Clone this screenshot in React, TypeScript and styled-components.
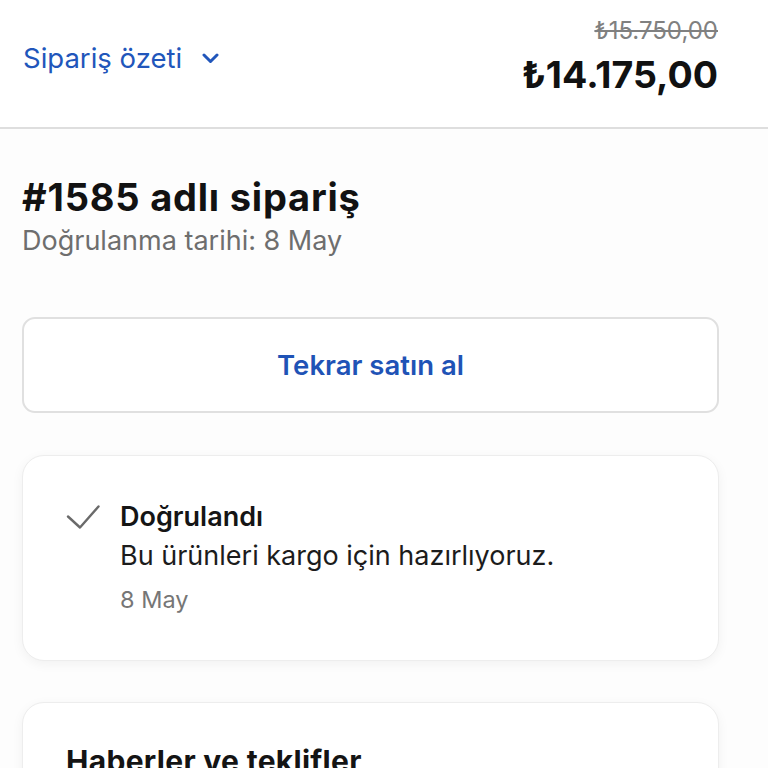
import React from 'react';
import styled, { createGlobalStyle } from 'styled-components';

const GlobalStyle = createGlobalStyle`
  html, body {
    margin: 0;
    padding: 0;
    background: #fdfdfd;
  }
  body {
    font-family: Inter, "Noto Sans", "DejaVu Sans", sans-serif;
    color: #141414;
    -webkit-font-smoothing: antialiased;
  }
`;

const Page = styled.div`
  width: 768px;
  height: 768px;
  overflow: hidden;
`;

const Header = styled.header`
  background: #ffffff;
  height: 129px;
  box-sizing: border-box;
  border-bottom: 2px solid #dedede;
  display: flex;
  justify-content: space-between;
  align-items: flex-start;
  padding: 17px 50px 0 23px;
`;

const SummaryToggle = styled.button`
  display: flex;
  align-items: center;
  gap: 20px;
  margin-top: 24px;
  padding: 0;
  border: none;
  background: none;
  font-family: inherit;
  font-size: 27.5px;
  color: #2156bb;
  cursor: pointer;
`;

const PriceBlock = styled.div`
  display: flex;
  flex-direction: column;
  align-items: flex-end;
`;

const OldPrice = styled.span`
  font-size: 24px;
  line-height: 28px;
  color: #808080;
  text-decoration: line-through;
  text-decoration-thickness: 2px;
`;

const Price = styled.span`
  margin-top: 8px;
  font-size: 37.5px;
  line-height: 44px;
  font-weight: 700;
  color: #111;
`;

const Main = styled.main`
  padding: 46px 49px 0 22px;
  display: flex;
  flex-direction: column;
`;

const Title = styled.h1`
  margin: 0;
  font-size: 38px;
  line-height: 44px;
  font-weight: 700;
  letter-spacing: 0.8px;
  color: #121212;
`;

const Subtitle = styled.p`
  margin: 7px 0 0;
  font-size: 27px;
  line-height: 30px;
  color: #6e6e6e;
`;

const OutlineButton = styled.button`
  margin-top: 61px;
  height: 96px;
  width: 100%;
  border: 2px solid #e0e0e0;
  border-radius: 13px;
  background: #ffffff;
  font-family: inherit;
  font-size: 27.5px;
  font-weight: 600;
  color: #1f53b6;
  cursor: pointer;
`;

const Card = styled.section<{ $top: number }>`
  margin-top: ${p => p.$top}px;
  background: #ffffff;
  border: 1px solid #ededed;
  border-radius: 22px;
  box-shadow: 0 3px 12px rgba(0, 0, 0, 0.05);
  box-sizing: border-box;
`;

const StatusCard = styled(Card)`
  height: 206px;
  padding: 45px 44px 0 43px;
  display: flex;
  gap: 20px;
`;

const CheckWrap = styled.div`
  width: 34px;
  flex: none;
  padding-top: 4px;
`;

const StatusText = styled.div`
  display: flex;
  flex-direction: column;
`;

const StatusTitle = styled.span`
  font-size: 27px;
  line-height: 32px;
  font-weight: 600;
  color: #151515;
`;

const StatusBody = styled.span`
  margin-top: 7px;
  font-size: 27px;
  line-height: 32px;
  color: #1c1c1c;
`;

const StatusDate = styled.span`
  margin-top: 14px;
  font-size: 23.5px;
  line-height: 28px;
  color: #767676;
`;

const NewsCard = styled(Card)`
  height: 200px;
  padding: 40px 44px 0 43px;
`;

const NewsTitle = styled.h2`
  margin: 0;
  font-size: 30px;
  line-height: 36px;
  font-weight: 700;
  letter-spacing: 0.3px;
  color: #141414;
`;

const Chevron = () => (
  <svg width="17" height="11" viewBox="0 0 17 11" fill="none">
    <path d="M2 2l6.5 6.5L15 2" stroke="#2156bb" strokeWidth="3" strokeLinecap="round" strokeLinejoin="round" />
  </svg>
);

const Check = () => (
  <svg width="34" height="24" viewBox="0 0 34 24" fill="none">
    <path d="M2 11.5l12 11L32.5 1.5" stroke="#6a6a6a" strokeWidth="2.4" strokeLinecap="round" strokeLinejoin="round" />
  </svg>
);

export default function App() {
  return (
    <Page>
      <GlobalStyle />
      <Header>
        <SummaryToggle>
          Sipariş özeti
          <Chevron />
        </SummaryToggle>
        <PriceBlock>
          <OldPrice>₺15.750,00</OldPrice>
          <Price>₺14.175,00</Price>
        </PriceBlock>
      </Header>
      <Main>
        <Title>#1585 adlı sipariş</Title>
        <Subtitle>Doğrulanma tarihi: 8 May</Subtitle>
        <OutlineButton>Tekrar satın al</OutlineButton>
        <StatusCard $top={42}>
          <CheckWrap>
            <Check />
          </CheckWrap>
          <StatusText>
            <StatusTitle>Doğrulandı</StatusTitle>
            <StatusBody>Bu ürünleri kargo için hazırlıyoruz.</StatusBody>
            <StatusDate>8 May</StatusDate>
          </StatusText>
        </StatusCard>
        <NewsCard $top={41}>
          <NewsTitle>Haberler ve teklifler</NewsTitle>
        </NewsCard>
      </Main>
    </Page>
  );
}
